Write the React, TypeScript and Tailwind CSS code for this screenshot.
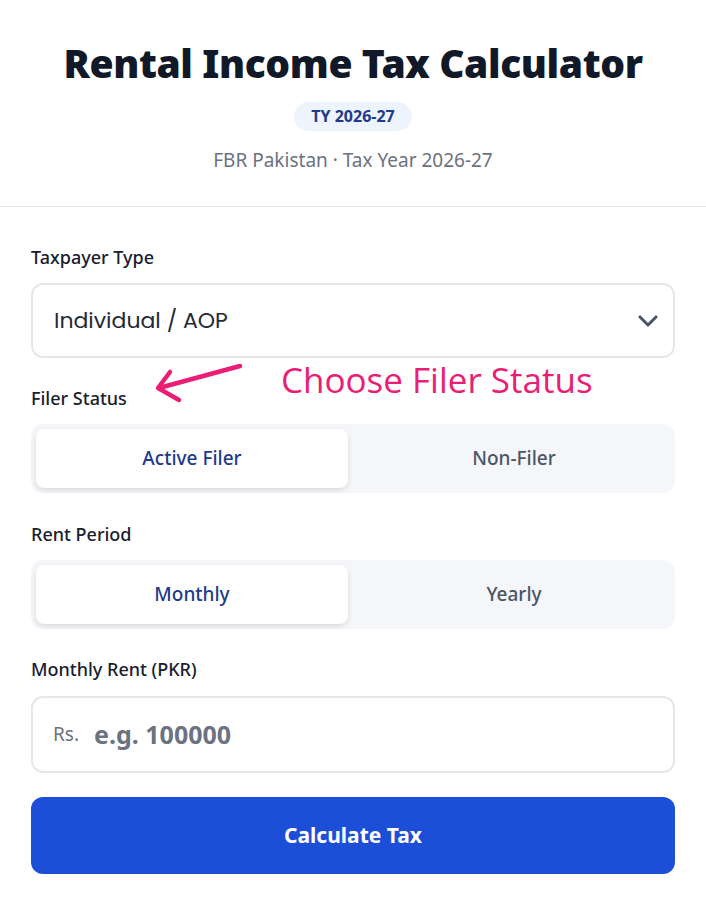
import { useState } from 'react';

const font = { fontFamily: '"Noto Sans", "Open Sans", sans-serif' };

function Segmented({
  options,
  value,
  onChange,
}: {
  options: string[];
  value: string;
  onChange: (v: string) => void;
}) {
  return (
    <div className="flex h-[69px] gap-[10px] rounded-xl bg-[#f4f6fa] p-[5px]">
      {options.map((opt) => (
        <button
          key={opt}
          onClick={() => onChange(opt)}
          className={
            opt === value
              ? 'flex-1 rounded-lg bg-white text-[19px] font-medium text-[#1e3a8a] shadow-[0_2px_5px_rgba(0,0,0,0.12)]'
              : 'flex-1 rounded-lg text-[19px] font-medium text-[#4b5563]'
          }
        >
          {opt}
        </button>
      ))}
    </div>
  );
}

export default function App() {
  const [filer, setFiler] = useState('Active Filer');
  const [period, setPeriod] = useState('Monthly');
  const [rent, setRent] = useState('');

  return (
    <div className="min-h-screen w-full bg-white" style={font}>
      {/* Header */}
      <div className="flex flex-col items-center border-b border-[#e5e7eb] pt-[38px] pb-[33px]">
        <h1 className="text-[39px] leading-[50px] font-black tracking-[-0.4px] text-[#111827]">
          Rental Income Tax Calculator
        </h1>
        <span className="mt-[14px] rounded-full bg-[#eef4fe] px-[17px] py-[4px] text-[16px] leading-[21px] font-bold text-[#1e3a8a]">
          TY 2026-27
        </span>
        <p className="mt-[16px] text-[19px] leading-[26px] text-[#6b7280]">FBR Pakistan · Tax Year 2026-27</p>
      </div>

      {/* Form */}
      <div className="px-[31px] pt-[38px]">
        <label className="block text-[18px] leading-[24px] font-medium text-[#18202e]">Taxpayer Type</label>
        <div className="mt-[14px] flex h-[75px] items-center rounded-xl border-2 border-[#e5e7eb] pl-[21px] pr-[9px]">
          <span className="text-[22px] text-[#1f2937]" style={{ fontFamily: 'Poppins, "Open Sans", sans-serif' }}>
            Individual / AOP
          </span>
          <svg
            className="ml-auto"
            width="32"
            height="32"
            viewBox="0 0 24 24"
            fill="none"
            stroke="#4b5563"
            strokeWidth="2.3"
            strokeLinecap="round"
            strokeLinejoin="round"
          >
            <path d="m6 9 6 6 6-6" />
          </svg>
        </div>

        <div className="relative mt-[28px]">
          <label className="block text-[18px] leading-[24px] font-medium text-[#18202e]">Filer Status</label>
          {/* annotation */}
          <svg className="absolute left-[120px] top-[-26px]" width="100" height="50" viewBox="0 0 100 50">
            <g stroke="#e91e74" strokeWidth="4.5" strokeLinecap="round" strokeLinejoin="round" fill="none">
              <path d="M89 6 L8 28" />
              <path d="M19 12 L7 28 L28 40" />
            </g>
          </svg>
          <span
            className="absolute left-[250px] top-[-26px] whitespace-nowrap text-[35px] leading-[40px] text-[#e91e74]"
            style={{ fontFamily: '"Open Sans", sans-serif' }}
          >
            Choose Filer Status
          </span>
        </div>
        <div className="mt-[14px]">
          <Segmented options={['Active Filer', 'Non-Filer']} value={filer} onChange={setFiler} />
        </div>

        <label className="mt-[29px] block text-[18px] leading-[24px] font-medium text-[#18202e]">Rent Period</label>
        <div className="mt-[14px]">
          <Segmented options={['Monthly', 'Yearly']} value={period} onChange={setPeriod} />
        </div>

        <label className="mt-[28px] block text-[18px] leading-[24px] font-medium text-[#18202e]">
          {period} Rent (PKR)
        </label>
        <div className="mt-[15px] flex h-[77px] items-center rounded-xl border-2 border-[#e5e7eb] px-[20px]">
          <span className="text-[19px] text-[#6b7280]">Rs.</span>
          <input
            value={rent}
            onChange={(e) => setRent(e.target.value)}
            placeholder="e.g. 100000"
            className="ml-[15px] min-w-0 flex-1 bg-transparent text-[25px] font-bold text-[#111827] outline-none placeholder:text-[#6b7280]"
          />
        </div>

        <button className="mt-[24px] h-[77px] w-full rounded-xl bg-[#1d4ed8] text-[21px] font-bold text-white">
          Calculate Tax
        </button>
      </div>
    </div>
  );
}
